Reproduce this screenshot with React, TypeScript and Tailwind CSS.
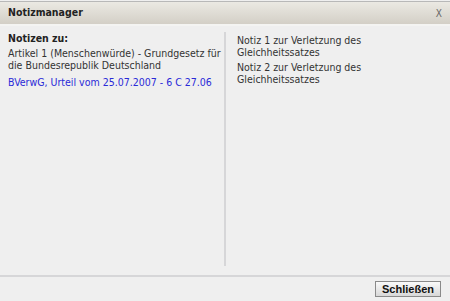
export default function App() {
  return (
    <div className="w-[450px] h-[301px] bg-[#efefef] flex flex-col font-['DejaVu_Sans_Condensed','DejaVu_Sans',sans-serif] text-[10.5px] text-[#333]">
      {/* title bar */}
      <div className="h-[25px] shrink-0 border-t border-t-[#b8b8b8] mt-[1px] border-b-2 border-b-[#f4f4f2] bg-gradient-to-b from-[#ebe9e3] to-[#d3cfc6] flex items-center justify-between pl-[8px] pr-[8px]">
        <span className="font-bold text-[10.5px] text-[#222]">Notizmanager</span>
        <span className="text-[10px] text-[#666]">X</span>
      </div>

      {/* content */}
      <div className="flex flex-1">
        <div className="w-[224px] pl-[8px] pr-[1px] pt-[6px] leading-[12px]">
          <div className="font-bold text-[#222] mb-[3px]">Notizen zu:</div>
          <div className="mb-[5px]">Artikel 1 (Menschenwürde) - Grundgesetz für die Bundesrepublik Deutschland</div>
          <div className="text-[#2a2ad8]">BVerwG, Urteil vom 25.07.2007 - 6 C 27.06</div>
        </div>
        <div className="w-[2px] bg-[#d6d6d8] mt-[6px] mb-[9px]" />
        <div className="flex-1 pl-[11px] pt-[8px] leading-[12px] flex flex-col gap-[3px]">
          <div>Notiz 1 zur Verletzung des<br />Gleichheitssatzes</div>
          <div>Notiz 2 zur Verletzung des<br />Gleichheitssatzes</div>
        </div>
      </div>

      {/* footer */}
      <div className="h-[26px] shrink-0 border-t-2 border-t-[#d6d6d8] flex items-center justify-end pr-[9px]">
        <button className="h-[16px] w-[66px] border border-[#8a8a8a] bg-gradient-to-b from-[#fafafa] to-[#d8d8d8] font-['Liberation_Sans',sans-serif] font-bold text-[11px] text-[#111] leading-none">
          Schließen
        </button>
      </div>
    </div>
  );
}
